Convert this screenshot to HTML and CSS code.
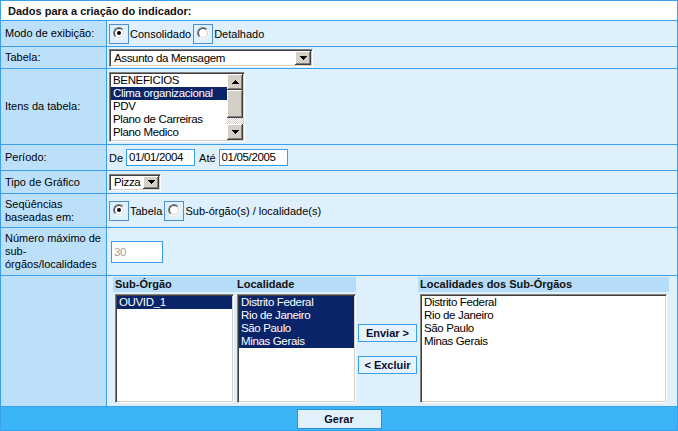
FILE: index.html
```html
<!DOCTYPE html>
<html lang="pt">
<head>
<meta charset="utf-8">
<title>Dados para a criação do indicador</title>
<link rel="stylesheet" href="styles.css">
</head>
<body>
<div class="form">
  <div class="hdr">Dados para a criação do indicador:</div>

  <div class="lbl">Modo de exibição:</div>
  <div class="val">
    <span class="rframe"><span class="radio"><span class="ring"><span class="dot"></span></span></span></span><span class="rtext">Consolidado</span>
    <span class="rframe second"><span class="radio"><span class="ring"></span></span></span><span class="rtext">Detalhado</span>
  </div>

  <div class="lbl">Tabela:</div>
  <div class="val">
    <div class="select wide"><span class="stext">Assunto da Mensagem</span><span class="ddbtn"><svg width="7" height="4" viewBox="0 0 7 4"><path d="M0 0h7v1h-1v1h-1v1h-1v1h-1v-1h-1v-1h-1v-1h-1z" fill="#000"/></svg></span></div>
  </div>

  <div class="lbl">Itens da tabela:</div>
  <div class="val">
    <div class="listbox">
      <div class="items">
        <div class="item">BENEFICIOS</div>
        <div class="item sel">Clima organizacional</div>
        <div class="item">PDV</div>
        <div class="item">Plano de Carreiras</div>
        <div class="item">Plano Medico</div>
      </div>
      <div class="sbar">
        <span class="sbtn"><svg width="7" height="4" viewBox="0 0 7 4"><path d="M3 0h1v1h1v1h1v1h1v1h-7v-1h1v-1h1v-1h1z" fill="#000"/></svg></span>
        <span class="thumb"></span>
        <span class="track"></span>
        <span class="sbtn"><svg width="7" height="4" viewBox="0 0 7 4"><path d="M0 0h7v1h-1v1h-1v1h-1v1h-1v-1h-1v-1h-1v-1h-1z" fill="#000"/></svg></span>
      </div>
    </div>
  </div>

  <div class="lbl">Período:</div>
  <div class="val">
    <span class="ptext">De</span><span class="tin date">01/01/2004</span><span class="ptext ate">Até</span><span class="tin date">01/05/2005</span>
  </div>

  <div class="lbl">Tipo de Gráfico</div>
  <div class="val">
    <div class="select small"><span class="stext">Pizza</span><span class="ddbtn"><svg width="7" height="4" viewBox="0 0 7 4"><path d="M0 0h7v1h-1v1h-1v1h-1v1h-1v-1h-1v-1h-1v-1h-1z" fill="#000"/></svg></span></div>
  </div>

  <div class="lbl">Seqüências baseadas em:</div>
  <div class="val">
    <span class="rframe"><span class="radio"><span class="ring"><span class="dot"></span></span></span></span><span class="rtext">Tabela</span>
    <span class="rframe second"><span class="radio"><span class="ring"></span></span></span><span class="rtext">Sub-órgão(s) / localidade(s)</span>
  </div>

  <div class="lbl">Número máximo de sub-órgãos/localidades</div>
  <div class="val num">
    <span class="tin max">30</span>
  </div>

  <div class="lbl"></div>
  <div class="val lists">
    <div class="lgrid">
      <div class="lh">Sub-Órgão</div>
      <div class="lh">Localidade</div>
      <div class="lh empty"></div>
      <div class="lh">Localidades dos Sub-Órgãos</div>

      <div class="lb">
        <div class="item sel">OUVID_1</div>
      </div>
      <div class="lb">
        <div class="item sel">Distrito Federal</div>
        <div class="item sel">Rio de Janeiro</div>
        <div class="item sel">São Paulo</div>
        <div class="item sel">Minas Gerais</div>
      </div>
      <div class="moves">
        <span class="btn">Enviar &gt;</span>
        <span class="btn">&lt; Excluir</span>
      </div>
      <div class="lb big">
        <div class="item">Distrito Federal</div>
        <div class="item">Rio de Janeiro</div>
        <div class="item">São Paulo</div>
        <div class="item">Minas Gerais</div>
      </div>
    </div>
  </div>

  <div class="foot"><span class="btn gerar">Gerar</span></div>
</div>
</body>
</html>
```

FILE: styles.css
```css
html, body {
  margin: 0;
  padding: 0;
  background: #ffffff;
}

body {
  font-family: "Liberation Sans", Arial, sans-serif;
  font-size: 11px;
  color: #000;
}

.form {
  display: grid;
  grid-template-columns: 105px 1fr;
  grid-template-rows: 19px 25px 21px 75px 25px 22px 33px 47px 130px 23px;
  gap: 1px;
  padding: 1px;
  width: 678px;
  height: 431px;
  box-sizing: border-box;
  background: #3aa0ec;
}

.hdr {
  grid-column: 1 / 3;
  background: #ffffff;
  font-weight: bold;
  padding-left: 7px;
  display: flex;
  align-items: center;
  color: #111;
}

.lbl {
  background: #bde0fa;
  padding-left: 4px;
  padding-right: 4px;
  display: flex;
  align-items: center;
  line-height: 13px;
}

.val {
  background: #dff0fd;
  padding-left: 2px;
  display: flex;
  align-items: center;
}

.foot {
  grid-column: 1 / 3;
  background: #3cb4f8;
  display: flex;
  align-items: center;
  justify-content: center;
}

/* radio groups */
.rframe {
  width: 20px;
  height: 20px;
  box-sizing: border-box;
  border: 1px solid #4f8fcf;
  padding: 2px 0 0 3px;
  flex: none;
}

.rframe.second {
  margin-left: 2px;
}

.radio {
  display: block;
  width: 12px;
  height: 12px;
  box-sizing: border-box;
  border-radius: 50%;
  border: 1px solid;
  border-color: #808080 #ffffff #ffffff #808080;
}

.ring {
  display: flex;
  align-items: center;
  justify-content: center;
  width: 10px;
  height: 10px;
  box-sizing: border-box;
  border-radius: 50%;
  border: 1px solid;
  border-color: #404040 #d4d0c8 #d4d0c8 #404040;
  background: #ffffff;
}

.dot {
  display: block;
  width: 4px;
  height: 4px;
  border-radius: 50%;
  background: #000;
}

.rtext {
  margin-left: 1px;
}

/* classic list font */
.stext, .item, .tin {
  font-family: "Liberation Sans", Arial, sans-serif;
  font-size: 11.5px;
  letter-spacing: -0.35px;
}

/* select */
.select {
  display: flex;
  box-sizing: border-box;
  background: #fff;
  border: 1px solid;
  border-color: #808080 #ffffff #ffffff #808080;
  box-shadow: inset 1px 1px #404040, inset -1px -1px #d4d0c8;
  padding: 1px;
}

.select.wide {
  width: 204px;
  height: 18px;
}

.select.small {
  width: 52px;
  height: 17px;
}

.stext {
  flex: 1;
  padding-left: 3px;
  line-height: 14px;
  white-space: nowrap;
}

.select.small .stext {
  line-height: 13px;
}

.ddbtn, .sbtn {
  width: 16px;
  flex: none;
  display: flex;
  align-items: center;
  justify-content: center;
  background: #d4d0c8;
  box-sizing: border-box;
  box-shadow: inset -1px -1px #404040, inset 1px 1px #ffffff, inset -2px -2px #808080;
}

/* listbox */
.listbox {
  display: flex;
  width: 136px;
  height: 70px;
  box-sizing: border-box;
  background: #fff;
  border: 1px solid;
  border-color: #808080 #ffffff #ffffff #808080;
  box-shadow: inset 1px 1px #404040, inset -1px -1px #d4d0c8;
  padding: 1px;
}

.items {
  flex: 1;
  overflow: hidden;
}

.item {
  height: 13px;
  line-height: 13px;
  padding-left: 2px;
  white-space: nowrap;
}

.item.sel {
  background: #0a246a;
  color: #ffffff;
}

.sbar {
  width: 16px;
  display: flex;
  flex-direction: column;
}

.sbtn {
  height: 16px;
}

.thumb {
  height: 28px;
  background: #d4d0c8;
  box-shadow: inset -1px -1px #404040, inset 1px 1px #ffffff, inset -2px -2px #808080;
}

.track {
  flex: 1;
  background: repeating-conic-gradient(#d4d0c8 0 25%, #ffffff 0 50%) 0 0 / 2px 2px;
}

/* text inputs */
.ptext {
  margin-right: 3px;
}

.ptext.ate {
  margin-left: 4px;
}

.tin {
  display: block;
  box-sizing: border-box;
  background: #fff;
  border: 1px solid #3aa0ec;
  padding-left: 2px;
}

.tin.date {
  width: 69px;
  height: 17px;
  line-height: 15px;
}

.val.num {
  padding-left: 4px;
}

.tin.max {
  width: 52px;
  height: 22px;
  line-height: 20px;
  color: #a0a0a0;
  border-color: #3d9cf0;
}

/* lists row */
.val.lists {
  align-items: flex-start;
  padding: 1px 0 0 6px;
}

.lgrid {
  display: grid;
  grid-template-columns: 122px 121px 62px 251px;
  grid-template-rows: 15px 109px;
  row-gap: 2px;
}

.lh {
  background: #b5dcf8;
  font-weight: bold;
  padding-left: 2px;
  line-height: 15px;
  color: #111;
}

.lh.empty {
  background: transparent;
}

.lb {
  margin-left: 2px;
  width: 119px;
  box-sizing: border-box;
  background: #fff;
  border: 1px solid;
  border-color: #808080 #ffffff #ffffff #808080;
  box-shadow: inset 1px 1px #404040, inset -1px -1px #d4d0c8;
  padding: 1px;
}

.lb.big {
  width: 247px;
}

.moves {
  display: flex;
  flex-direction: column;
  align-items: flex-start;
  padding: 30px 0 0 2px;
  gap: 14px;
}

.btn {
  display: flex;
  align-items: center;
  justify-content: center;
  width: 59px;
  height: 18px;
  box-sizing: border-box;
  border: 1px solid #3a9ee8;
  background: #e4f3fd;
  font-weight: bold;
  font-size: 11px;
  color: #0c0c2c;
}

.btn.gerar {
  width: 85px;
  height: 20px;
  background: #e1f1fc;
  border-color: #2a90e0;
}
```
